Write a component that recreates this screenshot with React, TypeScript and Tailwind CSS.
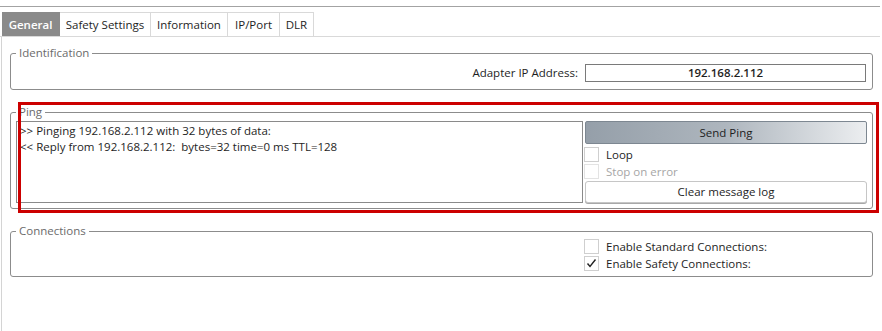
import React from "react";

const tabs = [
  { label: "General", width: "w-[58px]", active: true },
  { label: "Safety Settings", width: "w-[91px]", active: false },
  { label: "Information", width: "w-[77px]", active: false },
  { label: "IP/Port", width: "w-[52px]", active: false },
  { label: "DLR", width: "w-[34px]", active: false },
];

function GroupBox({ title, className, children }: { title: string; className: string; children: React.ReactNode }) {
  return (
    <div className={`relative ml-[8px] w-[863px] rounded-[3px] border border-[#8c8c8c] ${className}`}>
      <span className="absolute -top-[9px] left-[5px] bg-white px-[3px] leading-[16px] text-[#6b6b6b]">{title}</span>
      {children}
    </div>
  );
}

function CheckBox({ checked = false, disabled = false }: { checked?: boolean; disabled?: boolean }) {
  return (
    <span
      className={`-ml-[1px] flex h-[15px] w-[15px] shrink-0 items-center justify-center border bg-white ${
        disabled ? "border-[#e3e3e3]" : "border-[#cfcfcf]"
      }`}
    >
      {checked && (
        <svg width="13" height="13" viewBox="0 0 13 13">
          <polyline points="2.5,6.5 5,9.5 10.5,2.5" fill="none" stroke="#222" strokeWidth="1.4" />
        </svg>
      )}
    </span>
  );
}

export default function App() {
  return (
    <div className="relative h-[331px] w-[882px] overflow-hidden bg-white font-['Open_Sans',sans-serif] text-[11.5px] text-[#1e1e1e]">
      {/* window edge */}
      <div className="h-[6px]" />
      <div className="mr-[2px] border-t border-[#a3a3a3]" />
      <div className="h-[5px]" />

      {/* Tabs */}
      <div className="mr-[2px] flex h-[25px] border-b border-[#d9d9d9] pl-[2px]">
        {tabs.map((tab) => (
          <div
            key={tab.label}
            className={`flex ${tab.width} items-center justify-center border-r border-t leading-none ${
              tab.active ? "border-[#8a8a8a] bg-[#8a8a8a] font-semibold text-white" : "border-[#d9d9d9] text-[#1e1e1e]"
            }`}
          >
            {tab.label}
          </div>
        ))}
      </div>

      {/* Tab page */}
      <div className="ml-[1px] h-full border-l border-[#d4d4d4] pt-[16px]">
        <GroupBox title="Identification" className="h-[37px]">
          <div className="flex items-center justify-end gap-[7px] pr-[6px] pt-[10px]">
            <span>Adapter IP Address:</span>
            <div className="flex h-[18px] w-[281px] items-center justify-center border border-[#7a7a7a] font-semibold">
              192.168.2.112
            </div>
          </div>
        </GroupBox>

        <GroupBox title="Ping" className="mt-[22px] h-[97px]">
          <div className="flex gap-[2px] pl-[5px] pr-[5px] pt-[8px]">
            <div className="h-[82px] flex-1 whitespace-pre border border-[#8a8a8a] pl-[3px] pt-[1px] leading-[16px]">
              <div>{">> Pinging 192.168.2.112 with 32 bytes of data:"}</div>
              <div>{"<< Reply from 192.168.2.112:  bytes=32 time=0 ms TTL=128"}</div>
            </div>
            <div className="flex w-[282px] flex-col">
              <button className="h-[23px] rounded-[2px] border border-[#7d8791] bg-gradient-to-r from-[#959fa9] via-[#aeb6be] to-[#eceef0] text-[#1e1e1e]">
                Send Ping
              </button>
              <label className="mt-[3px] flex h-[15px] items-center gap-[7px]">
                <CheckBox />
                <span>Loop</span>
              </label>
              <label className="mt-[2px] flex h-[15px] items-center gap-[7px] text-[#a6a6a6]">
                <CheckBox disabled />
                <span>Stop on error</span>
              </label>
              <button className="mt-[2px] h-[22px] rounded-[3px] border border-[#c6c6c6] bg-white text-[#1e1e1e] shadow-[0_1px_0_#a8a8a8]">
                Clear message log
              </button>
            </div>
          </div>
        </GroupBox>

        <GroupBox title="Connections" className="mt-[22px] h-[46px]">
          <div className="flex gap-[2px] pl-[5px] pr-[5px] pt-[7px]">
            <div className="flex-1" />
            <div className="flex w-[282px] flex-col">
              <label className="flex h-[15px] items-center gap-[7px]">
                <CheckBox />
                <span>Enable Standard Connections:</span>
              </label>
              <label className="mt-[2px] flex h-[15px] items-center gap-[7px]">
                <CheckBox checked />
                <span>Enable Safety Connections:</span>
              </label>
            </div>
          </div>
        </GroupBox>
      </div>

      {/* highlight */}
      <div className="pointer-events-none absolute left-[18px] top-[102px] h-[111px] w-[861px] border-[3px] border-[#cc0000]" />
    </div>
  );
}
